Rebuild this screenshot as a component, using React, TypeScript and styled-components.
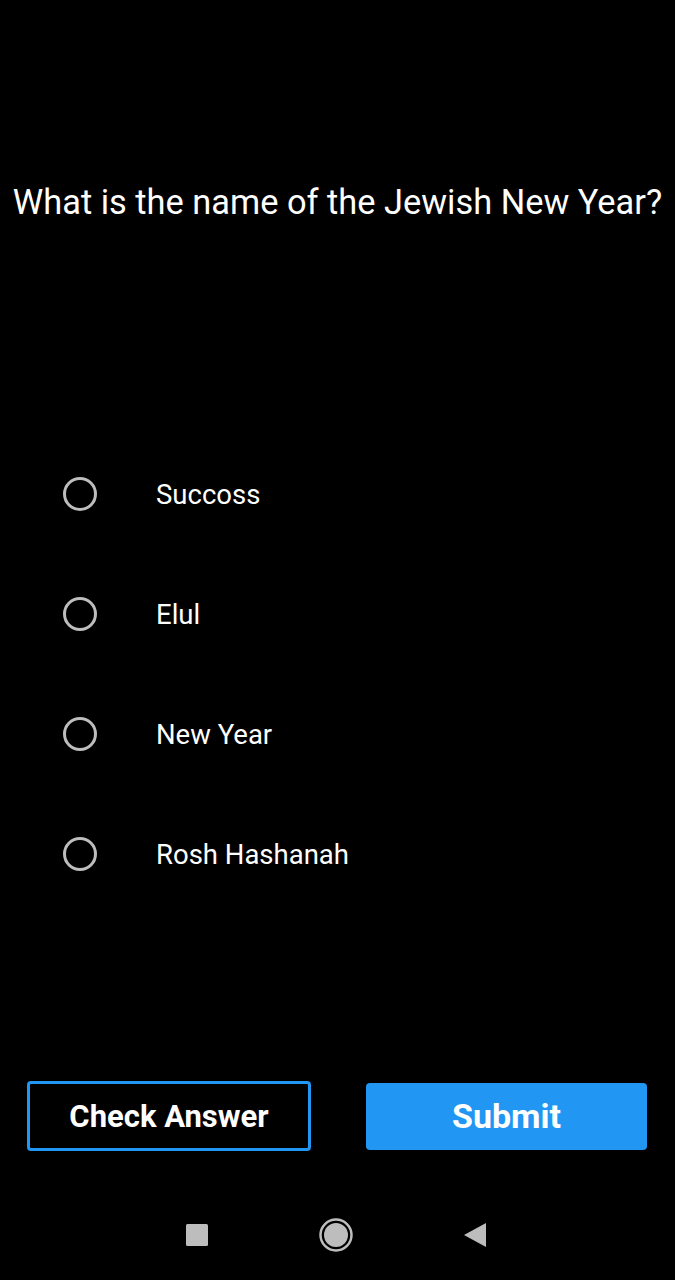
import React from "react";
import styled, { createGlobalStyle } from "styled-components";

const Global = createGlobalStyle`
  html, body { margin: 0; padding: 0; background: #000; }
  body { font-family: Roboto, "Noto Sans", sans-serif; }
`;

const Screen = styled.div`
  width: 675px;
  height: 1280px;
  background: #000;
  display: flex;
  flex-direction: column;
  color: #fff;
`;

const Question = styled.h1`
  margin: 0;
  padding-top: 181px;
  height: 43px;
  font-size: 34.4px;
  font-weight: 400;
  line-height: 43px;
  text-align: center;
  white-space: nowrap;
`;

const Options = styled.div`
  margin-top: 250px;
  display: flex;
  flex-direction: column;
  gap: 80px;
  padding-left: 63px;
`;

const Option = styled.label`
  display: flex;
  align-items: center;
  height: 40px;
  cursor: pointer;
`;

const Radio = styled.span`
  box-sizing: border-box;
  width: 34px;
  height: 34px;
  border-radius: 50%;
  border: 3px solid #bdbdbd;
  flex-shrink: 0;
`;

const OptionText = styled.span`
  margin-left: 59px;
  font-size: 27.5px;
  color: #fff;
`;

const Buttons = styled.div`
  margin-top: 207px;
  display: flex;
  padding: 0 28px 0 27px;
  justify-content: space-between;
  align-items: center;
`;

const Button = styled.button<{ $primary?: boolean }>`
  box-sizing: border-box;
  width: ${(p) => (p.$primary ? "281px" : "284px")};
  height: ${(p) => (p.$primary ? "67px" : "70px")};
  border-radius: 4px;
  border: ${(p) => (p.$primary ? "none" : "3px solid #2196f3")};
  background: ${(p) => (p.$primary ? "#2196f3" : "#000")};
  color: #fff;
  font-family: Roboto, sans-serif;
  font-size: ${(p) => (p.$primary ? "34px" : "31px")};
  font-weight: 700;
  padding: 0;
`;

const NavBar = styled.div`
  margin-top: 60px;
  height: 48px;
  display: flex;
  align-items: center;
  padding-left: 186px;
  gap: 111px;
`;

const NavIcon = styled.svg`
  display: block;
  flex-shrink: 0;
`;

export default function App() {
  const options = ["Succoss", "Elul", "New Year", "Rosh Hashanah"];
  return (
    <Screen>
      <Global />
      <Question>What is the name of the Jewish New Year?</Question>
      <Options>
        {options.map((o) => (
          <Option key={o}>
            <Radio />
            <OptionText>{o}</OptionText>
          </Option>
        ))}
      </Options>
      <Buttons>
        <Button>Check Answer</Button>
        <Button $primary>Submit</Button>
      </Buttons>
      <NavBar>
        <NavIcon width="22" height="22" viewBox="0 0 22 22">
          <rect x="0" y="0" width="22" height="22" rx="1.5" fill="#bdbdbd" />
        </NavIcon>
        <NavIcon width="34" height="34" viewBox="0 0 34 34">
          <circle cx="17" cy="17" r="15.5" fill="none" stroke="#bdbdbd" strokeWidth="2.5" />
          <circle cx="17" cy="17" r="12" fill="#bdbdbd" />
        </NavIcon>
        <NavIcon width="22" height="24" viewBox="0 0 22 24">
          <path d="M22 0 L22 24 L0 12 Z" fill="#bdbdbd" />
        </NavIcon>
      </NavBar>
    </Screen>
  );
}
